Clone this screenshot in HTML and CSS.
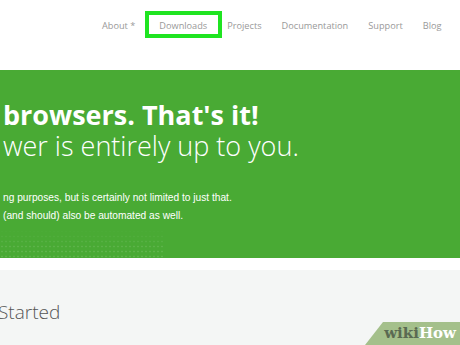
FILE: index.html
```html
<!DOCTYPE html>
<html lang="en">
<head>
    <meta charset="UTF-8">
    <title>Selenium</title>
    <link rel="stylesheet" href="styles.css">
</head>
<body>
    <header class="top-bar">
        <nav class="main-nav">
            <a href="#" class="about">About *</a>
            <a href="#" class="current">Downloads</a>
            <a href="#">Projects</a>
            <a href="#">Documentation</a>
            <a href="#">Support</a>
            <a href="#">Blog</a>
        </nav>
        <span class="highlight-box"></span>
    </header>

    <section class="hero">
        <h1>browsers. That's it!</h1>
        <h2>wer is entirely up to you.</h2>
        <p>ng purposes, but is certainly not limited to just that.</p>
        <p>(and should) also be automated as well.</p>
        <div class="dots"></div>
    </section>

    <section class="getting-started">
        <h3>Started</h3>
    </section>

    <div class="badge"><span class="wiki">wiki</span>How</div>
</body>
</html>
```

FILE: styles.css
```css
:root {
    --green: #49aa34;
    --nav-grey: #999999;
    --light-bg: #f4f6f5;
}
body {
    margin: 0;
    width: 460px;
    height: 345px;
    overflow: hidden;
    position: relative;
    background: #ffffff;
    font-family: 'Open Sans', sans-serif;
}
.top-bar {
    position: relative;
    height: 70px;
    background: #ffffff;
}
.main-nav {
    display: flex;
    gap: 20px;
    padding: 19px 0 0 102px;
}
.main-nav a {
    color: var(--nav-grey);
    font-size: 9.2px;
    line-height: 14px;
    text-decoration: none;
    white-space: nowrap;
}
.main-nav .about {
    margin-right: 4px;
}
.highlight-box {
    position: absolute;
    left: 145px;
    top: 11px;
    width: 69px;
    height: 19px;
    border: 4px solid #1fe421;
}
.hero {
    background: var(--green);
    color: #ffffff;
    height: 188px;
    padding: 0 0 0 3px;
    box-sizing: border-box;
    overflow: hidden;
}
.hero h1 {
    margin: 0;
    padding-top: 30px;
    font-size: 27px;
    font-weight: 700;
    line-height: 30px;
}
.hero h2 {
    margin: 2px 0 29px;
    font-size: 27px;
    font-weight: 300;
    line-height: 28px;
}
.hero p {
    margin: 0;
    font-family: 'Liberation Sans', Arial, sans-serif;
    font-size: 10.2px;
    line-height: 18px;
}
.hero .dots {
    width: 165px;
    height: 34px;
    margin: 4px 0 0 -3px;
    background-image: radial-gradient(circle, rgba(255, 255, 255, 0.12) 0.8px, transparent 1.2px);
    background-size: 4px 5px;
    -webkit-mask-image: linear-gradient(to top, #000 40%, transparent);
    mask-image: linear-gradient(to top, #000 40%, transparent);
}
.getting-started {
    margin-top: 12px;
    height: 75px;
    padding: 30px 0 0;
    box-sizing: border-box;
    background: var(--light-bg);
}
.getting-started h3 {
    margin: 0 0 0 -2px;
    font-size: 19px;
    line-height: 24px;
    font-weight: 300;
    color: #555555;
}
.badge {
    position: absolute;
    right: 0;
    bottom: 0;
    width: 95px;
    height: 23px;
    padding-right: 4px;
    box-sizing: border-box;
    background: #a4c08b;
    clip-path: polygon(18px 0, 100% 0, 100% 100%, 0 100%);
    text-align: right;
    font-family: 'DejaVu Serif', serif;
    font-weight: 700;
    font-size: 15px;
    line-height: 23px;
    color: #ffffff;
}
.badge .wiki {
    color: #5a6a52;
}
```
